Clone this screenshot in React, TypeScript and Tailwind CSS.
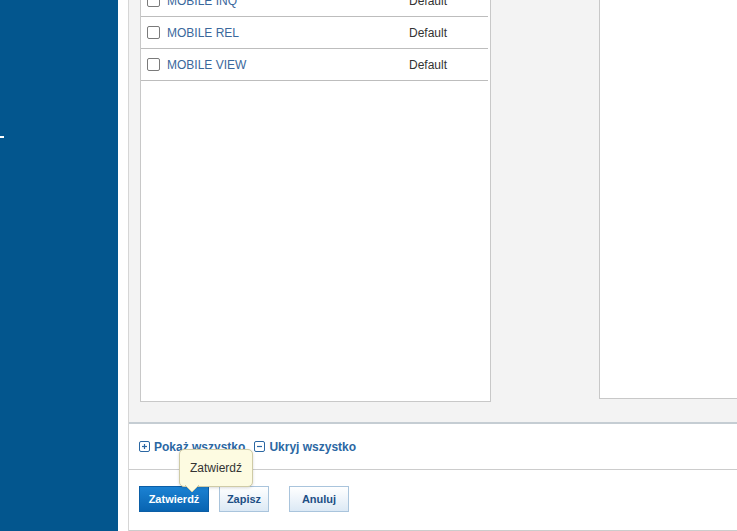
const rows = ['MOBILE INQ', 'MOBILE REL', 'MOBILE VIEW']

function PlusBox({ minus }: { minus?: boolean }) {
  return (
    <svg width="11" height="11" viewBox="0 0 11 11" className="shrink-0">
      <rect x="0.5" y="0.5" width="10" height="10" rx="1.5" fill="#fff" stroke="#2b67a3" />
      <path d="M3 5.5h5" stroke="#2b67a3" strokeWidth="1.2" />
      {!minus && <path d="M5.5 3v5" stroke="#2b67a3" strokeWidth="1.2" />}
    </svg>
  )
}

export default function App() {
  return (
    <div className="flex h-[531px] w-[737px] overflow-hidden bg-white font-['Liberation_Sans',Arial,sans-serif]">
      {/* Sidebar */}
      <div className="relative w-[118px] shrink-0 bg-[#03568e]">
        <div className="absolute left-0 top-[136px] h-[2px] w-[4px] bg-white" />
      </div>
      <div className="w-[10px] shrink-0 bg-white" />

      {/* Main */}
      <div className="relative flex w-[609px] shrink-0 flex-col border-l border-[#d6d6d6]">
        <div className="flex h-[424px] shrink-0 border-b-2 border-[#c5cdd3] bg-[#f3f3f3] pl-[11px]">
          {/* Left list */}
          <div className="-mt-[16px] h-[418px] w-[351px] shrink-0 border border-[#c8c8c8] bg-white">
            {rows.map((r) => (
              <div key={r} className="flex h-[32px] w-[347px] items-center border-b border-[#bdbdbd] pl-[6px] text-[12px]">
                <span className="h-[13px] w-[13px] shrink-0 rounded-[2px] border border-[#7a7a7a] bg-white" />
                <span className="ml-[7px] w-[242px] text-[#3a689c]">{r}</span>
                <span className="text-[#333]">Default</span>
              </div>
            ))}
          </div>
          {/* Right box */}
          <div className="-mt-[16px] ml-[108px] h-[415px] w-[160px] shrink-0 border border-[#c8c8c8] bg-white" />
        </div>

        {/* Links */}
        <div className="flex h-[46px] shrink-0 items-center gap-[4px] border-b border-[#cccccc] pl-[10px] text-[12px] font-bold text-[#2b67a3]">
          <PlusBox />
          <span className="mr-[5px]">Pokaż wszystko</span>
          <PlusBox minus />
          <span>Ukryj wszystko</span>
        </div>

        {/* Buttons */}
        <div className="flex h-[61px] shrink-0 border-b border-[#cccccc] pl-[10px] pt-[16px] text-[11px] font-bold">
          <button className="h-[26px] w-[70px] border border-[#0b5ea6] bg-gradient-to-b from-[#1b82d3] to-[#0864b1] text-white">
            Zatwierdź
          </button>
          <button className="ml-[10px] h-[26px] w-[50px] border border-[#a9c4dc] bg-gradient-to-b from-white to-[#dce9f5] text-[#1d4f85]">
            Zapisz
          </button>
          <button className="ml-[20px] h-[26px] w-[60px] border border-[#a9c4dc] bg-gradient-to-b from-white to-[#dce9f5] text-[#1d4f85]">
            Anuluj
          </button>
        </div>

        {/* Tooltip */}
        <div className="absolute left-[50px] top-[449px] flex h-[38px] w-[74px] items-center justify-center rounded-[5px] border border-[#cfcba6] bg-[#fdfbe1] text-[12px] text-[#333] shadow-[0_1px_3px_rgba(0,0,0,0.15)]">
          Zatwierdź
          <svg width="14" height="8" viewBox="0 0 14 8" className="absolute -bottom-[7px] left-[5px]">
            <path d="M0 0L7 7L14 0" fill="#fdfbe1" stroke="#cfcba6" />
            <path d="M1 0h12" stroke="#fdfbe1" strokeWidth="2" />
          </svg>
        </div>
      </div>
    </div>
  )
}
